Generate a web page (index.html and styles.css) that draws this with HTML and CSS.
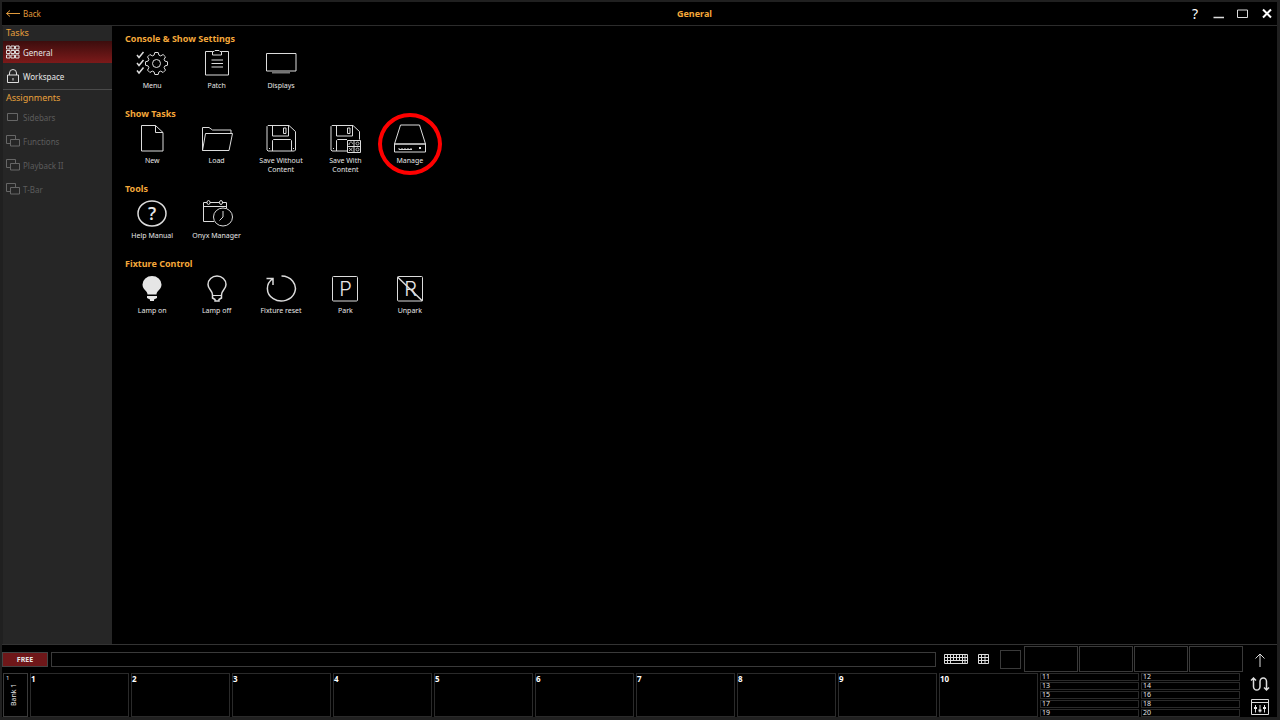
FILE: index.html
```html
<!DOCTYPE html>
<html lang="en">
<head>
    <meta charset="UTF-8">
    <meta name="viewport" content="width=device-width, initial-scale=1.0">
    <title>General</title>
    <link rel="stylesheet" href="styles.css">
</head>
<body>
    <div class="window">
        <header class="titlebar">
            <button type="button" class="back">
                <svg width="14" height="8" viewBox="0 0 14 8"><path d="M14 3.500H.5M4 .5L.5 3.500l3.500 3"/></svg>
                Back
            </button>
            <h1>General</h1>
            <div class="controls">
                <button type="button" class="help" aria-label="Help">?</button>
                <button type="button" aria-label="Minimize"><svg width="12" height="12" viewBox="0 0 12 12"><path class="mid" d="M.5 9.500h10.500"/></svg></button>
                <button type="button" aria-label="Maximize"><svg width="12" height="12" viewBox="0 0 12 12"><path d="M.5 2h10v7.500H.5z"/></svg></button>
                <button type="button" aria-label="Close"><svg width="12" height="12" viewBox="0 0 12 12"><path class="thick" d="M2 1.500l8 8M10 1.500l-8 8"/></svg></button>
            </div>
        </header>

        <div class="middle">
            <nav class="sidebar">
                <h2>Tasks</h2>
                <button type="button" class="item active">
                    <svg width="14" height="14" viewBox="0 0 14 14"><path d="M.5 1h3.500v3H.5zM5 1h3.500v3H5zM9.500 1H13v3H9.500zM.5 5.500h3.500v3H.5zM5 5.500h3.500v3H5zM9.500 5.500H13v3H9.500zM.5 10h3.500v3H.5zM5 10h3.500v3H5zM9.500 10H13v3H9.500z"/></svg>
                    General
                </button>
                <button type="button" class="item">
                    <svg width="14" height="14" viewBox="0 0 14 14"><path d="M1.500 6h11v7.500h-11zM3.500 6V4a3.500 3.500 0 0 1 7 0v2M7 9v2.500"/></svg>
                    Workspace
                </button>
                <h2 class="divided">Assignments</h2>
                <button type="button" class="item" disabled>
                    <svg width="14" height="14" viewBox="0 0 14 14"><path d="M1.500 3.500h10v7h-10z"/></svg>
                    Sidebars
                </button>
                <button type="button" class="item" disabled>
                    <svg width="14" height="14" viewBox="0 0 14 14"><path d="M4.500 9.500H.5v-8h9v4M4.500 5.500h9v6.500h-9z"/></svg>
                    Functions
                </button>
                <button type="button" class="item" disabled>
                    <svg width="14" height="14" viewBox="0 0 14 14"><path d="M4.500 9.500H.5v-8h9v4M4.500 5.500h9v6.500h-9z"/></svg>
                    Playback II
                </button>
                <button type="button" class="item" disabled>
                    <svg width="14" height="14" viewBox="0 0 14 14"><path d="M4.500 9.500H.5v-8h9v4M4.500 5.500h9v6.500h-9z"/></svg>
                    T-Bar
                </button>
            </nav>

            <main class="content">
                <section>
                    <h3>Console &amp; Show Settings</h3>
                    <div class="tiles">
                        <button type="button" class="tile">
                            <svg width="32" height="32" viewBox="0 0 32 32">
                                <path class="mid" d="M1 7l2 2.500L7.500 4M1 15l2 2.500L7.500 12M1 22.500l2 2.500 4.500-5.500"/>
                                <path transform="translate(20.500 15.500)" d="M-2.400-8.400L-1.700-11H1.700L2.400-8.400 4.200-7.600 6.600-9 9-6.600 7.600-4.200 8.400-2.400 11-1.700V1.700L8.400 2.400 7.600 4.200 9 6.600 6.600 9 4.200 7.600 2.400 8.400 1.700 11H-1.700L-2.400 8.400-4.200 7.600-6.600 9-9 6.600-7.600 4.200-8.400 2.400-11 1.700V-1.700L-8.400-2.400-7.600-4.200-9-6.600-6.600-9-4.200-7.600z"/>
                                <circle cx="20.500" cy="15.500" r="4"/>
                            </svg>
                            Menu
                        </button>
                        <button type="button" class="tile">
                            <svg width="32" height="32" viewBox="0 0 32 32"><path d="M11.500 3.500h-7v23.500h23V3.500h-7M14 2.500h4l1 1h1.500v3.500h-9V3.500H13zM10.500 12h11.500M10.500 15.500h11.500M10.500 19h11.500"/></svg>
                            Patch
                        </button>
                        <button type="button" class="tile">
                            <svg width="32" height="32" viewBox="0 0 32 32"><path d="M1.500 5.500h29.500v17.500H1.500z"/><path class="dim" d="M7 24.500h18"/></svg>
                            Displays
                        </button>
                    </div>
                </section>
                <section>
                    <h3>Show Tasks</h3>
                    <div class="tiles">
                        <button type="button" class="tile">
                            <svg width="32" height="32" viewBox="0 0 32 32"><path d="M5.500 2.500h14l7.500 7v18.500H5.500zM19.500 2.500v7H27"/></svg>
                            New
                        </button>
                        <button type="button" class="tile">
                            <svg width="32" height="32" viewBox="0 0 32 32"><path d="M1.500 27.500V4.500H8L11.500 7H30v3M4.500 10.500H31.500L28 27.500H1.500z"/></svg>
                            Load
                        </button>
                        <button type="button" class="tile">
                            <svg width="32" height="32" viewBox="0 0 32 32"><path d="M3 2.500h21l6.500 6v18.500l-1 1H3l-1-1V3.500zM7.500 2.500v10.500h16V2.500M18.500 5h2.500v5.500h-2.500zM7.500 28V17.500l1-1h17l1 1V28M4.500 25v1M28.500 25v1"/></svg>
                            Save Without Content
                        </button>
                        <button type="button" class="tile">
                            <svg width="32" height="32" viewBox="0 0 32 32">
                                <path d="M18 28H3l-1-1V3.500l1-1h21l6.500 6v8M7.500 2.500v10.500h16V2.500M18.500 5h2.500v5.500h-2.500zM7.500 28V17.500l1-1H18M4.500 25v1"/>
                                <path d="M18.500 17.500h13v12h-13zM25 17.500v12M18.500 23.500h13"/>
                                <path class="fine" d="M20 22c0-2 1-3 2-3s1.500 1 1.500 2M20 25l3.500 3M20 28l3.500-3"/>
                                <circle class="fine" cx="28.500" cy="20.500" r="1.500"/>
                                <circle class="fine" cx="28.500" cy="26.500" r="1.500"/>
                            </svg>
                            Save With Content
                        </button>
                        <button type="button" class="tile marked">
                            <svg width="32" height="32" viewBox="0 0 32 32"><path d="M6.500 2h19L31.500 21H.5zM.5 21h31v8H.5z"/><path d="M5 25v1.500h13M8 25v1M11 25v1M14 25v1M17 25v1"/><path class="solid" d="M25 24h2v2h-2z"/></svg>
                            Manage
                        </button>
                    </div>
                </section>
                <section>
                    <h3>Tools</h3>
                    <div class="tiles">
                        <button type="button" class="tile">
                            <svg width="32" height="32" viewBox="0 0 32 32"><ellipse class="mid" cx="16" cy="15.500" rx="14" ry="12.500"/><text class="question" x="16" y="22">?</text></svg>
                            Help Manual
                        </button>
                        <button type="button" class="tile">
                            <svg width="32" height="32" viewBox="0 0 32 32">
                                <path d="M13 23.500H2.500V4.500H6M9 4.500h9.500M21 4.500h4.500v6M2.500 8.500h23"/>
                                <ellipse cx="7.500" cy="4.500" rx="1.500" ry="2"/>
                                <ellipse cx="20" cy="4.500" rx="1.500" ry="2"/>
                                <ellipse cx="22" cy="19" rx="9.500" ry="9"/>
                                <path d="M22 13v6l-3.500 3.500"/>
                            </svg>
                            Onyx Manager
                        </button>
                    </div>
                </section>
                <section>
                    <h3>Fixture Control</h3>
                    <div class="tiles">
                        <button type="button" class="tile">
                            <svg width="32" height="32" viewBox="0 0 32 32"><path class="solid" d="M11.500 21.500c0-4-5-4.500-5-10a9.500 8.500 0 0 1 19 0c0 5.500-5 6-5 10zM11 23h10v2l-3 1.500v1.500h-4v-1.500L11 25z"/></svg>
                            Lamp on
                        </button>
                        <button type="button" class="tile">
                            <svg width="32" height="32" viewBox="0 0 32 32"><path class="mid" d="M11.500 22c0-5-4.500-5.500-4.500-10.500a9 8.500 0 0 1 18 0c0 5-4.500 5.500-4.500 10.500v3l-2.500 1.500v1.500h-4v-1.500L11.500 25z"/><path d="M11.500 22.500h9"/></svg>
                            Lamp off
                        </button>
                        <button type="button" class="tile">
                            <svg width="32" height="32" viewBox="0 0 32 32"><path class="mid" d="M16.500 3a14 12.500 0 1 1-8.500 2.500M1.500 5.500H8v6.500"/></svg>
                            Fixture reset
                        </button>
                        <button type="button" class="tile">
                            <svg width="32" height="32" viewBox="0 0 32 32"><rect x="3.500" y="3.500" width="25" height="24.500" rx="1"/><text class="letter" x="16.500" y="23">P</text></svg>
                            Park
                        </button>
                        <button type="button" class="tile">
                            <svg width="32" height="32" viewBox="0 0 32 32"><rect x="3.500" y="3.500" width="25" height="24.500" rx="1"/><text class="letter" x="16.500" y="23">R</text><path class="mid" d="M3.500 4L28.500 28"/></svg>
                            Unpark
                        </button>
                    </div>
                </section>
            </main>
        </div>

        <footer class="deck">
            <div class="decks">
                <div class="command">
                    <button type="button" class="free">FREE</button>
                    <input type="text" class="entry" aria-label="Command line">
                    <button type="button" class="keys" aria-label="Keyboard"><svg width="24" height="10" viewBox="0 0 24 10"><path d="M.5.500h23v9H.5zM.5 3.500h23M.5 6.500h23M3.500 0v10M6.500 0v10M9.500 0v7M12.500 0v7M15.500 0v7M18.500 0v10M21 0v10"/></svg></button>
                    <button type="button" class="keys" aria-label="Keypad"><svg width="11" height="10" viewBox="0 0 11 10"><path d="M.5.500h10v9H.5zM.5 3.500h10M.5 6.500h10M3.500 0v10M7 0v10"/></svg></button>
                    <button type="button" class="square" aria-label="Color"></button>
                    <div class="slots"><div></div><div></div><div></div><div></div></div>
                </div>
                <div class="playbacks">
                    <div class="bank"><small>1</small><span>Bank 1</span></div>
                    <div class="cells">
                        <div class="cell">1</div>
                        <div class="cell">2</div>
                        <div class="cell">3</div>
                        <div class="cell">4</div>
                        <div class="cell">5</div>
                        <div class="cell">6</div>
                        <div class="cell">7</div>
                        <div class="cell">8</div>
                        <div class="cell">9</div>
                        <div class="cell">10</div>
                        <div class="stack"><div>11</div><div>13</div><div>15</div><div>17</div><div>19</div></div>
                        <div class="stack"><div>12</div><div>14</div><div>16</div><div>18</div><div>20</div></div>
                    </div>
                </div>
            </div>
            <div class="tools">
                <button type="button" aria-label="Up"><svg width="20" height="16" viewBox="0 0 20 16"><path d="M10 15V2M5.500 6.500L10 2l4.500 4.500"/></svg></button>
                <button type="button" aria-label="Swap"><svg width="20" height="16" viewBox="0 0 20 16"><path class="mid" d="M1 4.500L3.500 2 6 4.500M3.500 2v8.500a3.200 3.500 0 0 0 6.500 0V5.500a3.200 3.500 0 0 1 6.500 0V14M14 11.500l2.500 2.500 2.500-2.500"/></svg></button>
                <button type="button" aria-label="Faders"><svg width="20" height="16" viewBox="0 0 20 16"><path d="M1.500.500h17v15h-17zM1.500 3.500h17M5.500 6v7.500M10 6v7.500M14.500 6v7.500"/><path class="solid" d="M4 8h3v2H4zM8.500 10.500h3v2h-3zM13 8h3v2h-3z"/></svg></button>
            </div>
        </footer>
    </div>
</body>
</html>
```
FILE: styles.css
```css
*,
*::after {
    margin: 0;
    padding: 0;
    box-sizing: border-box;
}

body {
    font-family: "Noto Sans", "Open Sans", sans-serif;
    font-size: 8px;
    background-color: #202020;
    color: #e6e6e6;
}

button {
    font: inherit;
    color: inherit;
    background: none;
    border: none;
    cursor: pointer;
}

svg {
    display: block;
    flex: none;
    fill: none;
    stroke: #dcdcdc;
    stroke-width: 1;
}

svg text {
    fill: #e6e6e6;
    stroke: none;
    text-anchor: middle;
}

.question {
    font-family: "Open Sans", sans-serif;
    font-size: 18px;
    font-weight: 600;
}

.letter {
    font-family: Inter, sans-serif;
    font-size: 20px;
    font-weight: 300;
}

.thick {
    stroke: #fff;
    stroke-width: 2;
}

.mid {
    stroke-width: 1.5;
}

.fine {
    stroke: #bbb;
}

.dim {
    stroke: #777;
    stroke-width: 2;
}

.solid {
    fill: #e6e6e6;
    stroke: none;
}

.window {
    display: flex;
    flex-direction: column;
    min-height: 100vh;
    border: solid #202020;
    border-width: 2px 3px 3px 2px;
    background-color: #000;
}

/* Title bar */
.titlebar {
    display: grid;
    grid-template-columns: 110px 1fr auto;
    align-items: center;
    height: 24px;
    border-bottom: 1px solid #2c2c2c;
}

.back {
    display: flex;
    align-items: center;
    gap: 3px;
    padding-left: 4px;
    color: #e09a3c;
}

.back svg {
    stroke: #e09a3c;
}

.titlebar h1 {
    grid-column: 2 / 4;
    grid-row: 1;
    font-size: 9px;
    text-align: center;
    color: #f5a83a;
}

.controls {
    display: flex;
    align-items: center;
    gap: 12px;
    grid-column: 3;
    grid-row: 1;
    padding-right: 4px;
}

.help {
    width: 12px;
    font-size: 14px;
    line-height: 16px;
    color: #fff;
}

/* Sidebar */
.middle {
    display: flex;
    flex: 1;
}

.sidebar {
    width: 110px;
    border-left: 1px solid #202020;
    background-color: #262626;
}

.sidebar h2 {
    padding-left: 3px;
    font-size: 9px;
    font-weight: normal;
    line-height: 14px;
    color: #e6a03c;
}

.sidebar .divided {
    margin-top: 1px;
    padding-top: 1px;
    border-top: 1px solid #4a4a4a;
}

.item {
    display: flex;
    align-items: center;
    gap: 3px;
    width: 100%;
    height: 24px;
    padding: 0 3px;
}

.item.active {
    height: 22px;
    margin: 1px 0;
    background: linear-gradient(#3c0d0d, #7c1a1a);
}

.item:disabled {
    color: #5c5c5c;
    cursor: default;
}

.item:disabled svg {
    stroke: #666;
}

/* Tiles */
.content {
    display: grid;
    flex: 1;
    grid-auto-rows: 75px;
    align-content: start;
    padding: 6px 8px;
}

.content h3 {
    padding-left: 5px;
    font-size: 9px;
    line-height: 13px;
    color: #f5a83a;
}

.tiles {
    display: grid;
    grid-template-columns: repeat(5, 1fr);
    align-items: start;
    max-width: 322px;
    padding-top: 3px;
}

.tile {
    display: flex;
    flex-direction: column;
    align-items: center;
    gap: 1px;
    padding: 0 6px;
    font-size: 7px;
    line-height: 9px;
}

/* Highlight ring over a tile */
.marked {
    position: relative;
}

.marked::after {
    content: "";
    position: absolute;
    top: -10px;
    left: 0;
    width: 64px;
    height: 62px;
    border: 4px solid #f00;
    border-radius: 50%;
}

/* Bottom deck */
.deck {
    display: flex;
    border-top: 1px solid #333;
}

.decks {
    flex: 1;
}

.command {
    display: flex;
    align-items: center;
    height: 28px;
}

.free {
    width: 46px;
    height: 15px;
    margin-right: 3px;
    font-size: 7px;
    font-weight: bold;
    background-color: #6e1719;
    border: 1px solid #444;
}

.entry {
    flex: 1;
    height: 15px;
    margin-right: 8px;
    color: #fff;
    background-color: #000;
    border: 1px solid #3a3a3a;
}

.keys {
    margin-right: 10px;
}

.square {
    width: 21px;
    height: 19px;
    margin: 0 3px 0 1px;
    border: 1px solid #3a3a3a;
}

.slots {
    display: grid;
    grid-template-columns: repeat(4, 54px);
    gap: 1px;
    height: 26px;
}

.slots div {
    border: 1px solid #3a3a3a;
}

.playbacks {
    display: flex;
    gap: 2px;
    height: 44px;
    padding: 0 3px 0 1px;
}

.bank {
    display: flex;
    width: 25px;
    border: 1px solid #3a3a3a;
}

.bank small {
    padding-left: 2px;
    font-size: 6px;
    line-height: 9px;
}

.bank span {
    writing-mode: vertical-rl;
    transform: rotate(180deg);
    font-size: 7px;
    line-height: 10px;
    text-align: center;
}

.cells {
    display: grid;
    flex: 1;
    grid-template-columns: repeat(12, 1fr);
    gap: 2px;
}

.cell {
    font-weight: bold;
    line-height: 9px;
    color: #fff;
    border: 1px solid #2a2a2a;
}

.stack {
    display: grid;
    grid-template-rows: repeat(5, 8px);
    gap: 1px;
}

.stack div {
    padding-left: 1px;
    font-size: 7px;
    line-height: 6px;
    border: 1px solid #2a2a2a;
}

.tools {
    display: flex;
    flex-direction: column;
    align-items: center;
    justify-content: space-between;
    width: 34px;
    padding: 7px 0 2px;
}
```
